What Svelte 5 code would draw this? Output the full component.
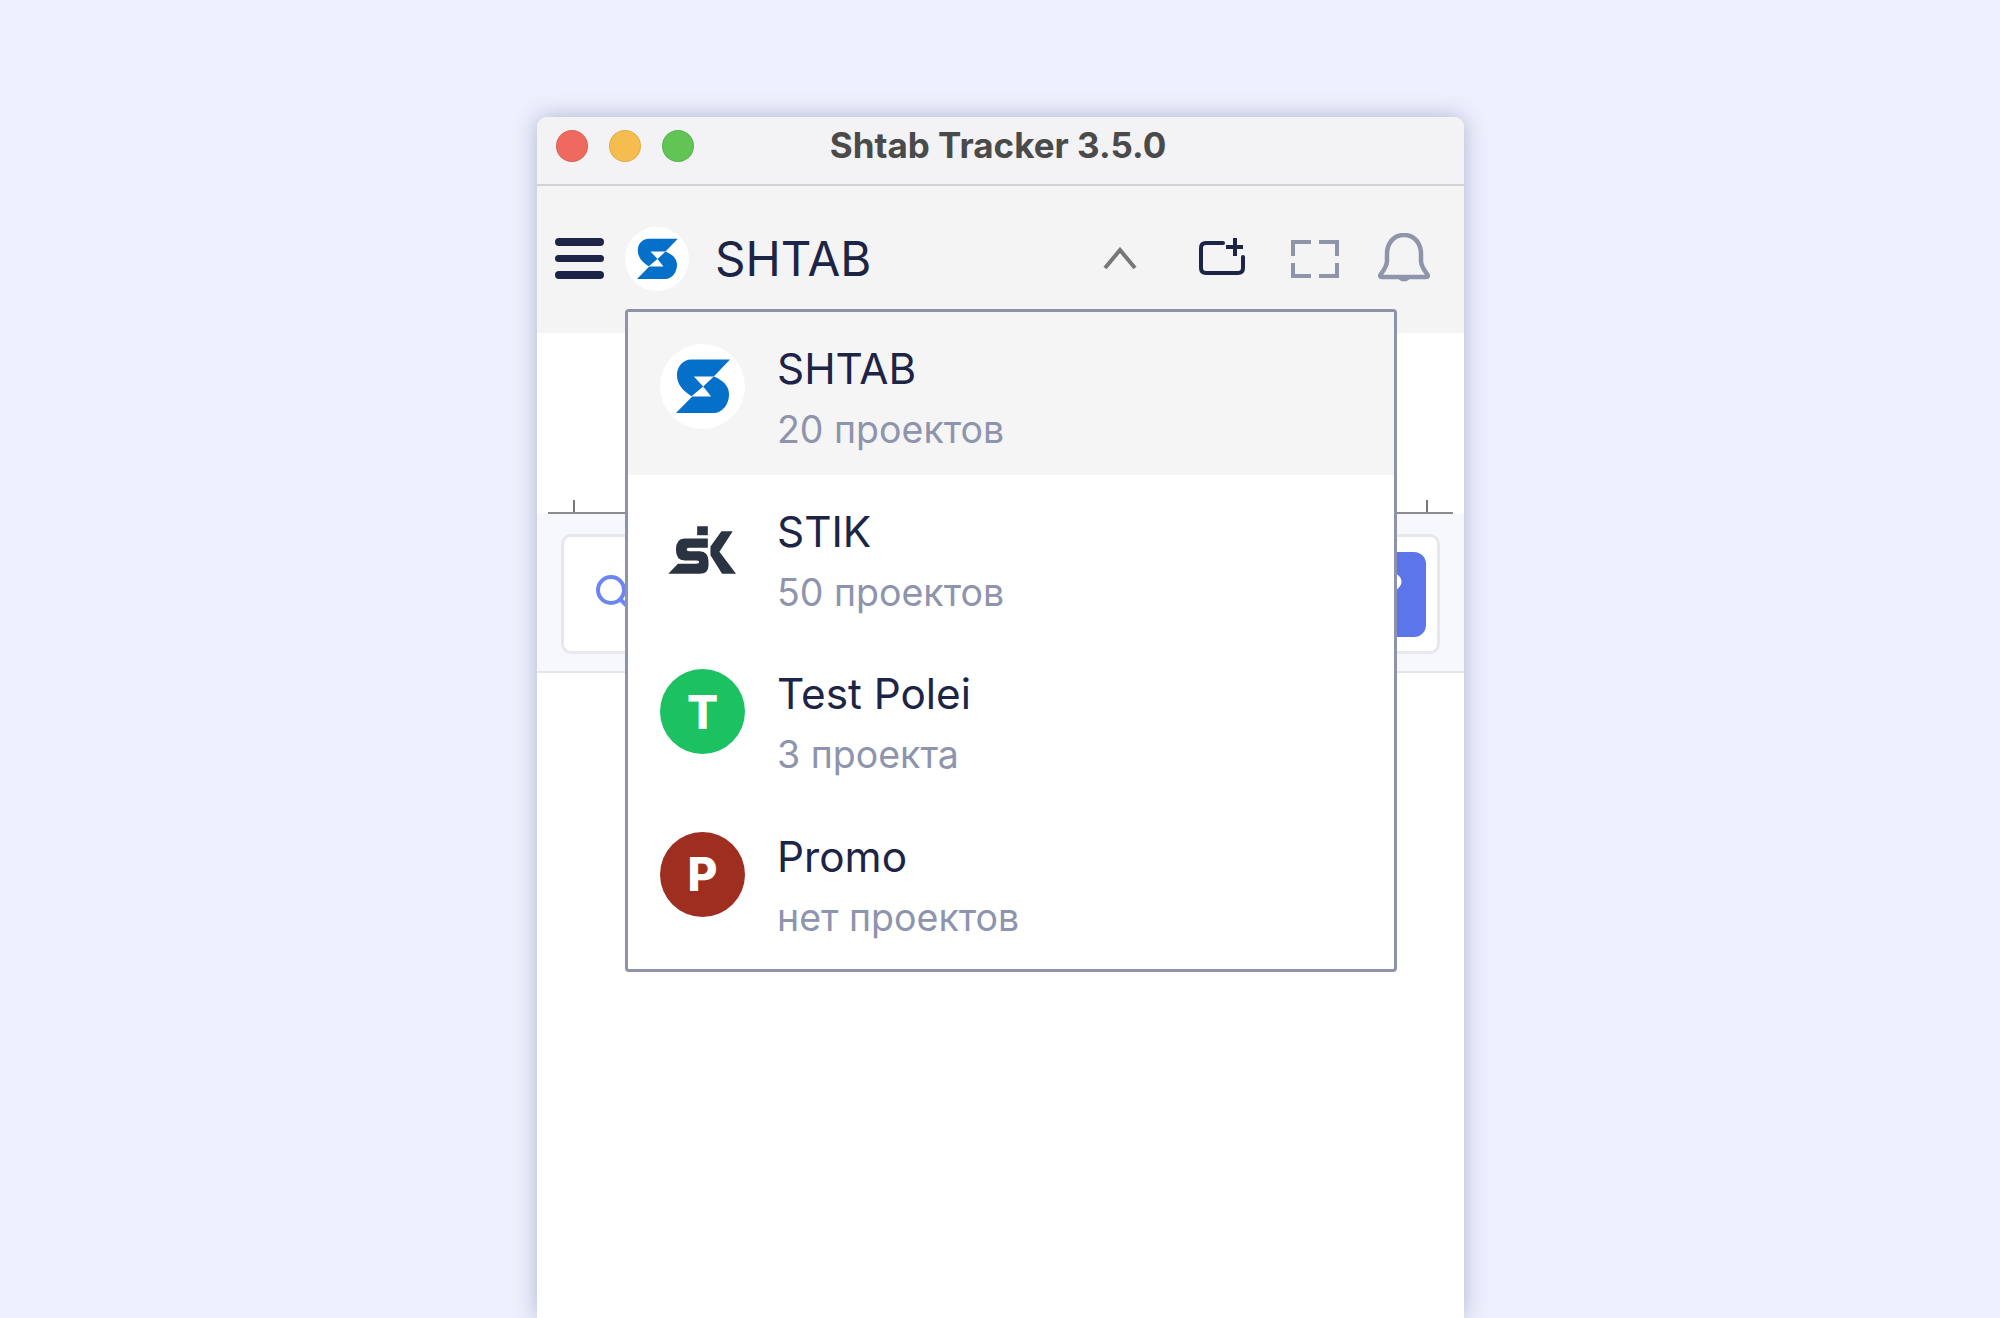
<script>
	let open = true;

	const workspaces = [
		{ name: 'SHTAB', sub: '20 проектов', logo: 'shtab', active: true },
		{ name: 'STIK', sub: '50 проектов', logo: 'stik' },
		{ name: 'Test Polei', sub: '3 проекта', letter: 'T', color: '#1cc162' },
		{ name: 'Promo', sub: 'нет проектов', letter: 'P', color: '#9e2e20' }
	];
</script>

{#snippet shtabLogo(size)}
	<svg class="logo" width={size} height={size} viewBox="28 10 256 256">
		<circle cx="156" cy="138" r="128" fill="#fff" />
		<path
			fill="#0570c9"
			d="M122 57H239L190 108H130L158 138L123 167C96 150 79 130 79 103C79 78 98 57 122 57Z"
		/>
		<path
			fill="#0570c9"
			d="M190 108C215 118 236 135 236 162C236 192 215 218 190 218H76L125 168H182L158 138Z"
		/>
	</svg>
{/snippet}

<div class="page">
	<div class="window">
		<div class="titlebar">
			<div class="lights">
				<span class="light red"></span>
				<span class="light yellow"></span>
				<span class="light green"></span>
			</div>
			<div class="title">Shtab Tracker 3.5.0</div>
		</div>

		<header class="header">
			<button class="burger" aria-label="Меню">
				<span></span>
				<span></span>
				<span></span>
			</button>
			{@render shtabLogo(64)}
			<span class="current">SHTAB</span>

			<button class="icon-btn chevron" aria-label="Свернуть" on:click={() => (open = !open)}>
				<svg width="34" height="23" viewBox="0 0 34 23" fill="none" stroke="#777" stroke-width="4">
					<path d="M2 21L17 3L32 21" />
				</svg>
			</button>
			<button class="icon-btn add" aria-label="Добавить">
				<svg width="46" height="37" viewBox="0 0 46 37" fill="none" stroke="#1c2546" stroke-width="4">
					<path d="M24 5H7Q2 5 2 10V30Q2 35 7 35H39Q44 35 44 30V19" stroke-linecap="round" />
					<path d="M27 9H44M36 0V18" />
				</svg>
			</button>
			<button class="icon-btn full" aria-label="На весь экран">
				<svg width="48" height="38" viewBox="0 0 48 38" fill="none" stroke="#8f94ab" stroke-width="4">
					<path d="M2 16V2H20M28 2H46V16M2 23V36H20M28 36H46V23" />
				</svg>
			</button>
			<button class="icon-btn bell" aria-label="Уведомления">
				<svg width="52" height="52" viewBox="0 0 52 52" fill="none" stroke="#8f94ab" stroke-width="4.5">
					<path
						d="M26 2C15 2 9 11 9 21V28C9 33 6 37 3 41Q1 44 4 44H48Q51 44 49 41C46 37 43 33 43 28V21C43 11 37 2 26 2Z"
						stroke-linejoin="round"
					/>
					<path d="M19 45Q26 52 33 45Z" fill="#8f94ab" stroke="none" />
				</svg>
			</button>
		</header>

		<div class="ruler">
			<i></i>
			<i></i>
		</div>

		<div class="band">
			<div class="card">
				<svg class="search" width="40" height="40" viewBox="0 0 40 40" fill="none" stroke="#6c85f0" stroke-width="4">
					<circle cx="15" cy="15" r="13" />
					<path d="M25 25L36 36" stroke-linecap="round" />
				</svg>
				<button class="go" aria-label="Справка">
					<svg width="30" height="40" viewBox="0 0 30 40" fill="none" stroke="#fff" stroke-width="5">
						<path d="M4 12C4 5 10 3 15 3C20 3 25 5 25 10C25 16 15 17 15 24" stroke-linecap="round" />
					</svg>
				</button>
			</div>
		</div>

		{#if open}
			<div class="dropdown">
				{#each workspaces as w}
					<div class="row" class:active={w.active}>
						{#if w.logo === 'shtab'}
							{@render shtabLogo(85)}
						{:else if w.logo === 'stik'}
							<svg class="logo" width="85" height="85" viewBox="28 -13 256 256">
								<g fill="#2a3342">
									<rect x="140" y="45" width="32" height="27" />
									<path
										d="M102 82H172V110H116Q108 110 108 115Q108 120 116 120H148Q174 122 174 150V164Q174 188 148 188H53L82 158H138Q146 158 146 153Q146 148 138 148H102Q76 148 76 116Q76 82 102 82Z"
									/>
									<path d="M213 60H247L207 122L257 188H215L180 132V106Z" />
								</g>
							</svg>
						{:else}
							<div class="avatar" style="background: {w.color}">{w.letter}</div>
						{/if}
						<div class="info">
							<div class="name">{w.name}</div>
							<div class="sub">{w.sub}</div>
						</div>
					</div>
				{/each}
			</div>
		{/if}
	</div>
</div>

<style>
	:global(body) {
		margin: 0;
		background: #edf0fd;
		font-family: 'Inter', 'Noto Sans', sans-serif;
	}

	.page {
		box-sizing: border-box;
		height: 100vh;
		padding-top: 117px;
		overflow: hidden;
		display: flex;
		justify-content: center;
	}

	.window {
		position: relative;
		width: 927px;
		background: #fff;
		border-radius: 10px 10px 0 0;
		box-shadow: 0 0 22px rgba(60, 68, 125, 0.34);
		margin-left: 1px;
	}

	/* Title bar */
	.titlebar {
		box-sizing: border-box;
		display: grid;
		grid-template-columns: 1fr auto 1fr;
		align-items: center;
		height: 69px;
		padding: 0 5px 9px 0;
		background: #f3f3f5;
		border-bottom: 2px solid #d2d2d4;
		border-radius: 10px 10px 0 0;
	}
	.lights {
		display: flex;
		gap: 21px;
		padding-left: 19px;
	}
	.light {
		box-sizing: border-box;
		width: 32px;
		height: 32px;
		border-radius: 50%;
		border: 1px solid rgba(0, 0, 0, 0.08);
	}
	.red {
		background: #ee6a5e;
	}
	.yellow {
		background: #f5bd4f;
	}
	.green {
		background: #61c454;
	}
	.title {
		font-size: 35px;
		font-weight: 700;
		color: #4a4a4a;
		margin-top: -2px;
	}

	/* Header */
	.header {
		box-sizing: border-box;
		display: flex;
		align-items: center;
		height: 147px;
		padding: 0 34px 2px 18px;
		background: #f4f4f4;
	}
	button {
		background: none;
		border: none;
		padding: 0;
		display: flex;
	}
	.burger {
		flex-direction: column;
		gap: 9px;
		width: 49px;
		margin-right: 21px;
	}
	.burger span {
		height: 7.5px;
		border-radius: 4px;
		background: #1c2546;
	}
	.logo {
		flex-shrink: 0;
		display: block;
	}
	.current {
		margin-left: 26px;
		font-size: 47.5px;
		color: #1c2546;
	}
	.chevron {
		margin-left: auto;
		margin-right: 62px;
	}
	.add {
		margin-right: 46px;
		margin-top: -5px;
	}
	.full {
		margin-right: 39px;
		margin-top: 1px;
	}
	.bell {
		margin-top: 1px;
	}

	/* Timeline */
	.ruler {
		display: flex;
		justify-content: space-between;
		height: 181px;
		margin: 0 11px;
		padding: 0 25px 0 25px;
		box-sizing: border-box;
		border-bottom: 2px solid #8c8c8c;
		align-items: flex-end;
	}
	.ruler i {
		width: 2px;
		height: 12px;
		background: #777;
	}

	.band {
		padding: 20px 24px 17px;
		background: #f7f8fd;
		border-bottom: 2px solid #e6e6ea;
	}
	.card {
		box-sizing: border-box;
		height: 120px;
		padding: 0 11px 0 32px;
		display: flex;
		align-items: center;
		justify-content: space-between;
		background: #fff;
		border: 3px solid #e8e8ec;
		border-radius: 10px;
	}
	.search {
		margin-top: 2px;
	}
	.go {
		width: 85px;
		height: 85px;
		padding: 20px 0 0 33px;
		box-sizing: border-box;
		background: #5c75e8;
		border-radius: 12px;
		overflow: hidden;
	}

	/* Workspace dropdown */
	.dropdown {
		position: absolute;
		left: 88px;
		top: 192px;
		width: 772px;
		box-sizing: border-box;
		padding-bottom: 7px;
		background: #fff;
		border: 3px solid #8e92aa;
		border-radius: 4px;
	}
	.row {
		display: flex;
		align-items: flex-start;
		gap: 32px;
		box-sizing: border-box;
		height: 162.5px;
		padding: 32px 32px 0;
	}
	.row.active {
		background: #f5f5f5;
	}
	.avatar {
		flex-shrink: 0;
		width: 85px;
		height: 85px;
		border-radius: 50%;
		display: flex;
		align-items: center;
		justify-content: center;
		color: #fff;
		font-size: 46px;
		font-weight: 800;
	}
	.info {
		margin-top: -5px;
	}
	.name {
		font-size: 42.3px;
		line-height: 60px;
		color: #1c2546;
	}
	.sub {
		font-size: 37.5px;
		line-height: 61px;
		color: #8e94ad;
	}
</style>
